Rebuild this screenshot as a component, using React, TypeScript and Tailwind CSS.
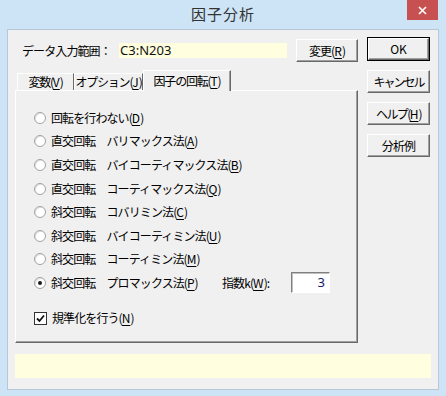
import React from 'react'

// Windows classic style dialog: 因子分析

const U = ({ c }: { c: string }) => <span className="underline underline-offset-[2px] tracking-normal">{c}</span>

function Btn({ children, className = '' }: { children: React.ReactNode; className?: string }) {
  return (
    <div
      className={`flex items-center justify-center whitespace-nowrap bg-[#f0f0f0] border border-t-white border-l-white border-r-[#696969] border-b-[#696969] shadow-[inset_-1px_-1px_0_#a0a0a0] text-[12px] text-black ${className}`}
    >
      {children}
    </div>
  )
}

function Radio({ checked = false }: { checked?: boolean }) {
  return (
    <div className="w-[12px] h-[12px] rounded-full border border-[#a2a2a2] bg-white flex items-center justify-center shrink-0 shadow-[inset_1px_1px_0_#e2e2e2]">
      {checked && <div className="w-[4px] h-[4px] rounded-full bg-[#1a1a1a]" />}
    </div>
  )
}

const rows: { a: string; b: string; m: string }[] = [
  { a: '回転を行わない', b: '', m: 'D' },
  { a: '直交回転', b: 'バリマックス法', m: 'A' },
  { a: '直交回転', b: 'バイコーティマックス法', m: 'B' },
  { a: '直交回転', b: 'コーティマックス法', m: 'Q' },
  { a: '斜交回転', b: 'コバリミン法', m: 'C' },
  { a: '斜交回転', b: 'バイコーティミン法', m: 'U' },
  { a: '斜交回転', b: 'コーティミン法', m: 'M' },
]

export default function App() {
  return (
    <div className="w-[446px] h-[396px] bg-[#cde4f7] flex flex-col font-['Noto_Sans_CJK_JP','Noto_Sans',sans-serif] text-[12px] tracking-[-0.9px] text-black">
      {/* title bar */}
      <div className="relative h-[29px] flex items-center justify-center">
        <span className="text-[15px] text-[#333] tracking-[1px]">因子分析</span>
        <div className="absolute right-[8px] top-0 w-[31px] h-[20px] bg-[#c75050] flex items-center justify-center">
          <svg width="9" height="9" viewBox="0 0 9 9">
            <path d="M1 1 L8 8 M8 1 L1 8" stroke="white" strokeWidth="1.6" />
          </svg>
        </div>
      </div>

      {/* client area */}
      <div className="mx-[7px] h-[361px] border border-[#b7c7d6] bg-[#f0f0f0] flex flex-col">
        <div className="flex pl-[7px]">
          {/* left column */}
          <div className="w-[343px] flex flex-col">
            <div className="mt-[9px] h-[23px] flex items-center">
              <span className="pl-[7px] w-[104px] whitespace-nowrap">データ入力範囲：</span>
              <div className="w-[168px] h-[15px] bg-[#ffffe0] flex items-center pl-[1px] font-['Noto_Sans',sans-serif] text-[13px] tracking-normal text-[#111]">
                C3:N203
              </div>
              <div className="flex-1" />
              <Btn className="w-[62px] h-[23px]">
                変更(<U c="R" />)
              </Btn>
            </div>

            {/* tabs */}
            <div className="mt-[8px] h-[20px] flex items-end pl-[2px] whitespace-nowrap tracking-[-1.2px]">
              <div className="w-[57px] h-[17px] flex items-center justify-center border-t border-l border-r border-t-white border-l-white border-r-[#696969]">
                変数(<U c="V" />)
              </div>
              <div className="w-[69px] h-[17px] flex items-center justify-center border-t border-l border-r border-t-white border-l-white border-r-[#696969]">
                オプション(<U c="J" />)
              </div>
              <div className="relative z-10 -mb-[1px] w-[88px] h-[21px] bg-[#f0f0f0] flex items-center justify-center border-t border-l border-r border-t-white border-l-white border-r-[#696969] shadow-[inset_-1px_0_0_#a0a0a0]">
                因子の回転(<U c="T" />)
              </div>
            </div>

            {/* tab panel */}
            <div className="h-[253px] border border-t-white border-l-white border-r-[#696969] border-b-[#696969] shadow-[inset_-1px_-1px_0_#a0a0a0] pt-[15px] pl-[18px] flex flex-col whitespace-nowrap">
              {rows.map((r, i) => (
                <div key={i} className="h-[23.6px] flex items-center gap-[5px]">
                  <Radio />
                  <span>
                    {r.a}
                    {r.b && <>　{r.b}</>}(<U c={r.m} />)
                  </span>
                </div>
              ))}
              <div className="h-[23.6px] flex items-center gap-[5px]">
                <Radio checked />
                <span className="w-[166px]">
                  斜交回転　プロマックス法(<U c="P" />)
                </span>
                <span className="w-[64px]">
                  指数k(<U c="W" />):
                </span>
                <div className="w-[39px] h-[21px] bg-white border border-t-[#808080] border-l-[#808080] border-r-white border-b-white shadow-[inset_1px_1px_0_#c0c0c0] flex items-center justify-end pr-[4px] text-[13px] tracking-normal text-[#13206a] font-['Noto_Sans',sans-serif]">
                  3
                </div>
              </div>
              <div className="mt-[12px] h-[23px] flex items-center gap-[5px]">
                <div className="w-[13px] h-[13px] border border-[#333] bg-white flex items-center justify-center">
                  <svg width="9" height="9" viewBox="0 0 9 9">
                    <path d="M1 4.5 L3.5 7 L8 1.5" stroke="#111" strokeWidth="1.8" fill="none" />
                  </svg>
                </div>
                <span>
                  規準化を行う(<U c="N" />)
                </span>
              </div>
            </div>
          </div>

          {/* right buttons */}
          <div className="ml-[9px] flex flex-col gap-[9px] mt-[7px]">
            <div className="w-[63px] h-[24px] border border-black">
              <Btn className="w-full h-full tracking-normal">OK</Btn>
            </div>
            <Btn className="w-[63px] h-[23px] tracking-[-2px]">キャンセル</Btn>
            <Btn className="w-[63px] h-[23px] tracking-[-1.6px]">
              ヘルプ(<U c="H" />)
            </Btn>
            <Btn className="w-[63px] h-[23px]">分析例</Btn>
          </div>
        </div>

        {/* status bar */}
        <div className="mt-[11px] ml-[7px] w-[416px] h-[24px] bg-[#ffffe0]" />
      </div>
    </div>
  )
}
